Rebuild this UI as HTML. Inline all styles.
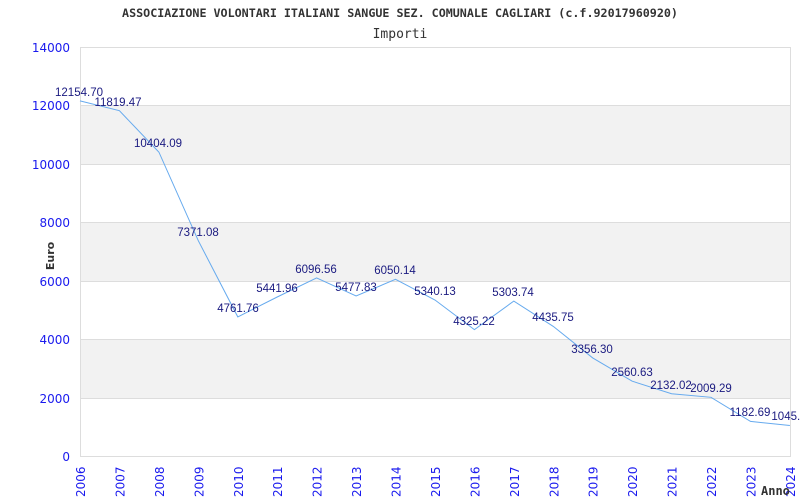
<!DOCTYPE html>
<html><head><style>body{margin:0;background:#fff}svg{display:block}</style></head><body>
<svg width="800" height="500" xmlns="http://www.w3.org/2000/svg">
<rect width="800" height="500" fill="#fff"/>
<text x="400" y="17" text-anchor="middle" font-family="DejaVu Sans Mono,Liberation Mono,monospace" font-weight="bold" font-size="11.7" fill="#333">ASSOCIAZIONE VOLONTARI ITALIANI SANGUE SEZ. COMUNALE CAGLIARI (c.f.92017960920)</text>
<text x="400" y="38" text-anchor="middle" font-family="DejaVu Sans Mono,Liberation Mono,monospace" font-size="13" fill="#333">Importi</text>
<g fill="#f2f2f2"><rect x="80" y="105.6" width="710" height="58.4"/><rect x="80" y="222.7" width="710" height="58.4"/><rect x="80" y="339.9" width="710" height="58.4"/></g>
<g stroke="#ddd" stroke-width="1"><line x1="80" y1="47.5" x2="790" y2="47.5"/><line x1="80" y1="105.5" x2="790" y2="105.5"/><line x1="80" y1="164.5" x2="790" y2="164.5"/><line x1="80" y1="222.5" x2="790" y2="222.5"/><line x1="80" y1="281.5" x2="790" y2="281.5"/><line x1="80" y1="339.5" x2="790" y2="339.5"/><line x1="80" y1="398.5" x2="790" y2="398.5"/><line x1="80" y1="456.5" x2="790" y2="456.5"/><line x1="80.5" y1="47" x2="80.5" y2="457"/><line x1="790.5" y1="47" x2="790.5" y2="457"/></g>
<g font-family="DejaVu Sans,Liberation Sans,sans-serif" font-size="12" fill="#1a1aee" text-anchor="end">
<text x="70" y="52">14000</text><text x="70" y="110">12000</text><text x="70" y="169">10000</text><text x="70" y="227">8000</text><text x="70" y="286">6000</text><text x="70" y="344">4000</text><text x="70" y="403">2000</text><text x="70" y="461">0</text>
</g>
<text transform="translate(54,256) rotate(-90)" text-anchor="middle" font-family="DejaVu Sans,sans-serif" font-weight="bold" font-size="11" fill="#333">Euro</text>
<g font-family="DejaVu Sans,Liberation Sans,sans-serif" font-size="12" fill="#1a1aee">
<text transform="translate(85,497) rotate(-90)">2006</text>
<text transform="translate(124.4,497) rotate(-90)">2007</text>
<text transform="translate(163.9,497) rotate(-90)">2008</text>
<text transform="translate(203.3,497) rotate(-90)">2009</text>
<text transform="translate(242.8,497) rotate(-90)">2010</text>
<text transform="translate(282.2,497) rotate(-90)">2011</text>
<text transform="translate(321.6,497) rotate(-90)">2012</text>
<text transform="translate(361.1,497) rotate(-90)">2013</text>
<text transform="translate(400.5,497) rotate(-90)">2014</text>
<text transform="translate(440,497) rotate(-90)">2015</text>
<text transform="translate(479.4,497) rotate(-90)">2016</text>
<text transform="translate(518.8,497) rotate(-90)">2017</text>
<text transform="translate(558.3,497) rotate(-90)">2018</text>
<text transform="translate(597.7,497) rotate(-90)">2019</text>
<text transform="translate(637.2,497) rotate(-90)">2020</text>
<text transform="translate(676.6,497) rotate(-90)">2021</text>
<text transform="translate(716,497) rotate(-90)">2022</text>
<text transform="translate(755.5,497) rotate(-90)">2023</text>
<text transform="translate(794.9,497) rotate(-90)">2024</text>
</g>
<text x="761" y="495" font-family="DejaVu Sans Mono,monospace" font-weight="bold" font-size="12" fill="#333">Anno</text>
<polyline fill="none" stroke="#66aaee" stroke-width="1" points="80,100.9 119.4,110.7 158.9,152.1 198.3,240.7 237.8,316.9 277.2,297 316.6,277.9 356.1,296 395.5,279.3 435,300 474.4,329.6 513.8,301.1 553.3,326.4 592.7,357.9 632.2,381.2 671.6,393.7 711,397.3 750.5,421.4 789.9,425.5"/>
<g font-family="Liberation Sans,Arial,sans-serif" font-size="11.5" fill="#1a1a80" text-anchor="middle">
<text x="79" y="96">12154.70</text><text x="118" y="106">11819.47</text><text x="158" y="147">10404.09</text><text x="198" y="236">7371.08</text><text x="238" y="312">4761.76</text><text x="277" y="292">5441.96</text><text x="316" y="273">6096.56</text><text x="356" y="291">5477.83</text><text x="395" y="274">6050.14</text><text x="435" y="295">5340.13</text><text x="474" y="325">4325.22</text><text x="513" y="296">5303.74</text><text x="553" y="321">4435.75</text><text x="592" y="353">3356.30</text><text x="632" y="376">2560.63</text><text x="671" y="389">2132.02</text><text x="711" y="392">2009.29</text><text x="750" y="416">1182.69</text><text x="789" y="420">1045.1</text>
</g>
</svg>
</body></html>
